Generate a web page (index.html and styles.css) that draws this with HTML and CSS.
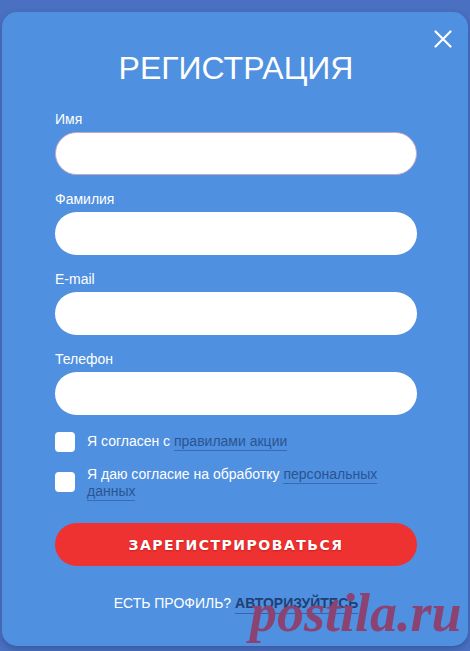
FILE: index.html
```html
<!DOCTYPE html>
<html lang="ru">
<head>
<meta charset="utf-8">
<title>Регистрация</title>
<link rel="stylesheet" href="styles.css">
</head>
<body>
<div class="modal">
  <button class="close" aria-label="Закрыть">
    <svg width="18" height="18" viewBox="0 0 18 18"><path d="M1.5 1.5L16.5 16.5M16.5 1.5L1.5 16.5" stroke="#fff" stroke-width="2.2" stroke-linecap="round"/></svg>
  </button>
  <h1 class="title">РЕГИСТРАЦИЯ</h1>
  <form class="form">
    <label class="field"><span class="label">Имя</span><input class="input input-focus" type="text"></label>
    <label class="field"><span class="label">Фамилия</span><input class="input" type="text"></label>
    <label class="field"><span class="label">E-mail</span><input class="input" type="text"></label>
    <label class="field"><span class="label">Телефон</span><input class="input" type="text"></label>
    <div class="check"><span class="box"></span><span class="check-text">Я согласен с <a class="link">правилами акции</a></span></div>
    <div class="check check-2"><span class="box"></span><span class="check-text">Я даю согласие на обработку <a class="link">персональных</a> <a class="link">данных</a></span></div>
    <button class="submit" type="button">ЗАРЕГИСТРИРОВАТЬСЯ</button>
    <p class="footer">ЕСТЬ ПРОФИЛЬ? <a class="login">АВТОРИЗУЙТЕСЬ</a></p>
  </form>
  <span class="watermark">postila.ru</span>
</div>
</body>
</html>
```
FILE: styles.css
```css
html, body { margin: 0; padding: 0; }
body {
  background: #4a70c1;
  font-family: "Liberation Sans", Arial, sans-serif;
  height: 651px;
  overflow: hidden;
}
.modal {
  position: relative;
  margin: 12px 2px 0 2px;
  height: 634px;
  box-sizing: border-box;
  background: #4f90e0;
  border-radius: 15px;
  box-shadow: 0 3px 6px rgba(40, 60, 120, 0.45);
  padding: 0 51px 0 53px;
  overflow: hidden;
}
.close {
  position: absolute;
  top: 18px;
  right: 16px;
  width: 18px;
  height: 18px;
  padding: 0;
  border: 0;
  background: none;
}
.title {
  margin: 0;
  padding-top: 36px;
  text-align: center;
  color: #fff;
  font-weight: normal;
  font-size: 32px;
  line-height: 40px;
}
.form { display: flex; flex-direction: column; margin-top: 23px; }
.field { display: flex; flex-direction: column; margin-bottom: 16px; }
.label {
  color: #fff;
  font-size: 14px;
  line-height: 16px;
  margin-bottom: 5px;
}
.input {
  height: 43px;
  box-sizing: border-box;
  border: 0;
  border-radius: 22px;
  background: #fff;
  width: 362px;
}
.input-focus { border: 1px solid #c4a8c6; }
.check {
  display: flex;
  align-items: flex-start;
  gap: 12px;
  margin-top: 1px;
  color: #fff;
  font-size: 14px;
  line-height: 17px;
}
.check-2 { margin-top: 13px; }
.box {
  flex: none;
  width: 20px;
  height: 20px;
  border-radius: 4px;
  background: #fff;
}
.check-2 .box { margin-top: 7px; }
.check-text { padding-top: 1px; }
.link {
  color: #2b5592;
  border-bottom: 1px solid #3d6aae;
  padding-bottom: 1px;
}
.submit {
  margin-top: 23px;
  height: 43px;
  width: 362px;
  border: 0;
  border-radius: 22px;
  background: #ee3131;
  color: #fff;
  font-family: "DejaVu Sans", Verdana, sans-serif;
  font-weight: bold;
  font-size: 14px;
  letter-spacing: 1.5px;
  text-shadow: 0 1px 2px rgba(120, 0, 0, 0.35);
}
.footer {
  margin: 29px 0 0;
  text-align: center;
  color: #fff;
  font-size: 14px;
  line-height: 16px;
}
.login {
  color: #1f3f73;
  font-weight: bold;
  border-bottom: 1px solid #3a64a6;
  padding-bottom: 2px;
}
.watermark {
  position: absolute;
  left: 248px;
  top: 571px;
  font-family: "Liberation Serif", serif;
  font-style: italic;
  font-weight: bold;
  font-size: 54px;
  line-height: 60px;
  color: #8b4372;
}
```
